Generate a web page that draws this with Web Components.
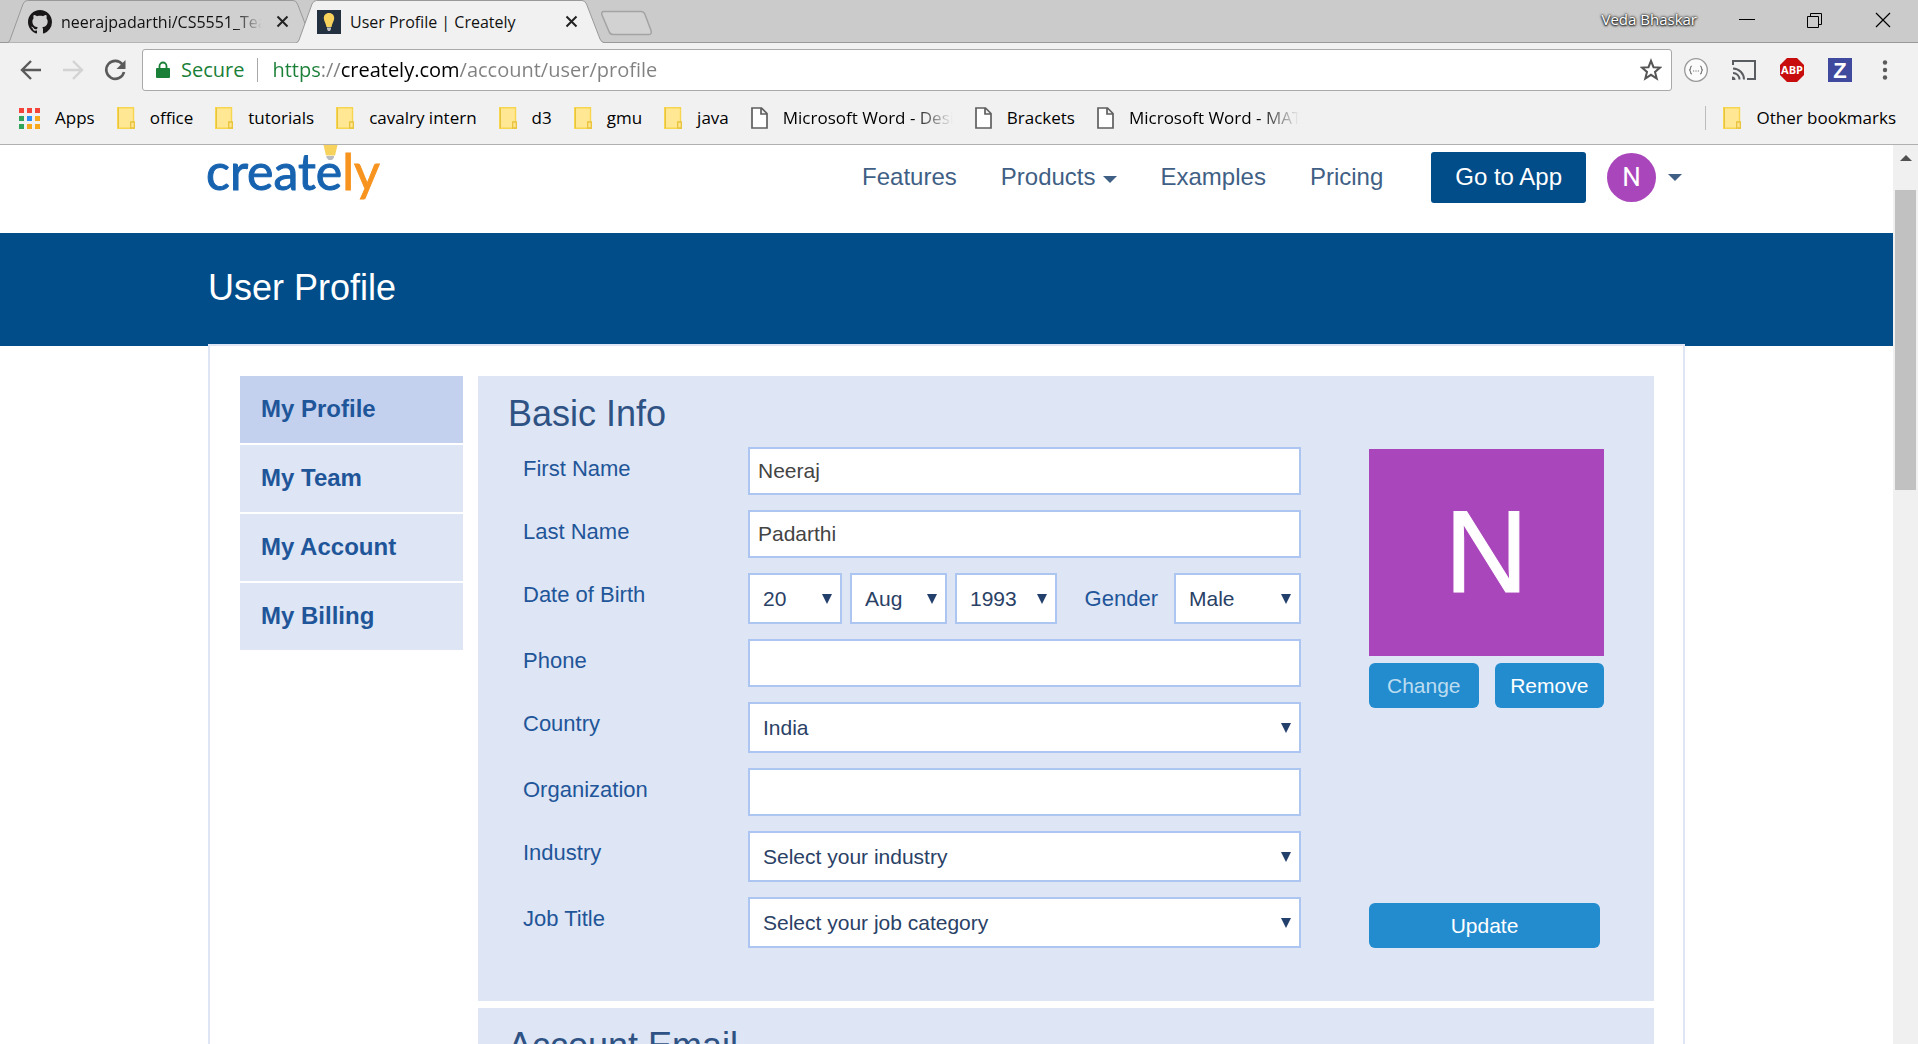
<!DOCTYPE html>
<html lang="en">
<head>
<meta charset="utf-8">
<title>User Profile | Creately</title>
<style>
  html, body { margin: 0; height: 100%; overflow: hidden; }
  body { font-family: "Liberation Sans", Arial, sans-serif; background: #fff; }
</style>
</head>
<body>
<app-window></app-window>

<script>
const UI = '"Open Sans", "Noto Sans", sans-serif';

function define(name, render) {
  customElements.define(name, class extends HTMLElement {
    connectedCallback() {
      if (this.shadowRoot) return;
      this.attachShadow({ mode: 'open' }).innerHTML = render(this);
    }
  });
}
const attr = (el, n, d = '') => el.getAttribute(n) ?? d;

/* ---------- browser frame ---------- */

define('browser-tab', el => {
  const on = el.hasAttribute('active');
  return `
<style>
  :host { display: grid; grid-template-columns: 308px; height: 43px; margin-right: -19px; position: relative; z-index: ${on ? 1 : 0}; font: 16px/22px ${UI}; color: #111; }
  svg.shape, .row { grid-area: 1 / 1; }
  .row { display: flex; align-items: center; min-width: 0; padding: 0 26px 0 21px; }
  .title { flex: 1; min-width: 0; margin: 0 14px 0 9px; overflow: hidden; white-space: nowrap; ${on ? '' : '-webkit-mask-image: linear-gradient(90deg,#000 86%,transparent); mask-image: linear-gradient(90deg,#000 86%,transparent);'} }
  button { border: 0; padding: 0; background: none; width: 13px; height: 13px; display: block; }
  button svg { display: block; }
</style>
<svg class="shape" width="308" height="43" viewBox="0 0 308 43">
  <path d="M0 ${on ? 43.5 : 42.5} L0.5 42.5 Q2 42.5 3 40 L16 4 Q17.500 0.500 20.500 0.500 H286 Q289 0.500 290.500 4 L304 39 Q305.500 42.500 308 42.500 ${on ? 'V43.500' : ''}" fill="${on ? '#f1f1f1' : '#d0d0d0'}" stroke="#999"/>
  ${on ? '<path d="M2 42h304v1H2z" fill="#f1f1f1"/>' : ''}
</svg>
<div class="row">
  <slot name="icon"></slot>
  <span class="title"><slot></slot></span>
  <button aria-label="Close tab"><svg width="13" height="13" viewBox="0 0 13 13"><path d="M1.500 1.500l10 10M11.500 1.500l-10 10" stroke="#222" stroke-width="2"/></svg></button>
</div>`;
});

define('tab-strip', () => `
<style>
  :host { display: flex; height: 42px; background: #cbcbcb; border-bottom: 1px solid #999; font: 16px/22px ${UI}; }
  .tabs { display: flex; flex: 1; padding-left: 7px; }
  .new { border: 0; background: none; padding: 0; margin: 10px 0 0 15px; height: 26px; }
  svg { display: block; }
  .user { color: #fff; margin: 8px 0 0; height: 22px; text-shadow: 0 0 3px #222, 0 0 2px #222, 0 1px 2px #222; font-size: 15px; }
  .win { display: flex; gap: 52px; padding: 12px 27px 0 42px; }
  .win button { border: 0; background: none; padding: 0; width: 16px; height: 16px; }
</style>
<div class="tabs">
  <browser-tab>
    <svg slot="icon" width="24" height="24" viewBox="0 0 16 16"><path fill="#191717" d="M8 0C3.580 0 0 3.580 0 8c0 3.540 2.290 6.530 5.470 7.590.4.070.550-.170.550-.380 0-.190-.010-.820-.010-1.490-2.010.370-2.530-.490-2.690-.940-.090-.230-.480-.940-.820-1.130-.280-.150-.680-.520-.010-.530.630-.010 1.080.580 1.230.820.720 1.210 1.870.870 2.330.660.070-.520.280-.870.510-1.070-1.780-.2-3.640-.890-3.640-3.950 0-.870.310-1.590.820-2.150-.080-.2-.360-1.020.080-2.120 0 0 .670-.210 2.200.820.640-.180 1.320-.270 2-.270s1.360.090 2 .270c1.530-1.040 2.200-.820 2.200-.820.440 1.100.160 1.920.080 2.120.510.560.820 1.270.820 2.150 0 3.070-1.870 3.750-3.650 3.950.290.250.540.730.540 1.480 0 1.070-.010 1.930-.010 2.200 0 .210.150.460.550.380A8.010 8.010 0 0 0 16 8c0-4.420-3.580-8-8-8z"/></svg>
    neerajpadarthi/CS5551_Team</browser-tab>
  <browser-tab active>
    <svg slot="icon" width="24" height="24" viewBox="0 0 24 24"><path fill="#22303f" d="M0 0h24v24H0z"/><path fill="#f7d25c" d="M12 3c3.400 0 5.200 2.400 5.200 5.200 0 3-2.200 5-2.700 8.800h-5C9 13.200 6.800 11.200 6.800 8.200 6.800 5.400 8.600 3 12 3z"/><path fill="#b9bcc0" d="M10 17.500h4v1.500l-1 2h-2l-1-2z"/></svg>
    User Profile | Creately</browser-tab>
  <button class="new" aria-label="New tab"><svg width="52" height="26" viewBox="0 0 52 26"><path d="M4 1.500h37q3 0 4 3l6 16q1 4-2 4H13q-3 0-4-3L2 5q-1-3.500 2-3.500z" fill="#d2d2d2" stroke="#a3a3a3" stroke-width="1.500"/></svg></button>
</div>
<span class="user">Veda Bhaskar</span>
<div class="win">
  <button aria-label="Minimize"><svg width="16" height="16"><path d="M0 7.500h16" stroke="#000"/></svg></button>
  <button aria-label="Restore"><svg width="16" height="16" fill="none" stroke="#000"><path d="M.5 4.500h11v11H.5zM3.500 4V1.500h11v11H12"/></svg></button>
  <button aria-label="Close"><svg width="16" height="16"><path d="M1 1l14 14M15 1L1 15" stroke="#000" stroke-width="1.200"/></svg></button>
</div>`);

define('tool-bar', () => `
<style>
  :host { display: flex; align-items: center; height: 42px; padding: 6px 22px 5px 19px; background: #f1f1f1; }
  button { border: 0; background: none; padding: 0; display: block; height: 24px; }
  svg { display: block; }
  .nav { display: flex; gap: 18px; margin-right: 15px; }
  .box { flex: 1; display: flex; align-items: center; box-sizing: border-box; height: 42px; border: 1px solid #a9a9a9; border-radius: 3px; background: #fff; padding: 0 9px 0 13px; font: 20px/28px ${UI}; color: #1a7f37; }
  .secure { margin: 0 13px 0 11px; }
  .sep { width: 1px; height: 24px; background: #a9a9a9; margin-right: 14px; }
  input { flex: 1; min-width: 0; border: 0; padding: 0; outline: 0; font: inherit; color: transparent;
    background: linear-gradient(90deg, #1a7f37 0 var(--a), #808080 var(--a) var(--b), #000 var(--b) var(--c), #808080 var(--c));
    --a: 48px; --b: 69px; --c: 187px; -webkit-background-clip: text; background-clip: text; }
  .ext { display: flex; gap: 24px; margin-left: 12px; }
</style>
<div class="nav">
  <button aria-label="Back"><svg width="24" height="24" viewBox="0 0 24 24" fill="none" stroke="#5a5a5a" stroke-width="2.400"><path d="M22 12H4M12 3l-9 9 9 9"/></svg></button>
  <button aria-label="Forward"><svg width="24" height="24" viewBox="0 0 24 24" fill="none" stroke="#d3d3d3" stroke-width="2.400"><path d="M2 12h18M12 3l9 9-9 9"/></svg></button>
  <button aria-label="Reload"><svg width="24" height="24" viewBox="0 0 24 24"><path d="M19.500 6.500A9 9 0 1 0 21 14" fill="none" stroke="#5a5a5a" stroke-width="2.600"/><path d="M22.500 2v9h-9z" fill="#5a5a5a"/></svg></button>
</div>
<div class="box">
  <svg width="14" height="18" viewBox="0 0 14 18"><path fill="#1a7f37" d="M1 7h12q1 0 1 1v8q0 1-1 1H1q-1 0-1-1V8q0-1 1-1z"/><path d="M3.500 8V5a3.500 3.500 0 0 1 7 0v3" fill="none" stroke="#1a7f37" stroke-width="1.800"/></svg>
  <span class="secure">Secure</span><span class="sep"></span>
  <input type="text" aria-label="Address" value="https://creately.com/account/user/profile">
  <button aria-label="Bookmark this page"><svg width="22" height="24" viewBox="0 0 22 24"><path d="M11 2.800l2.500 6.400 6.600.4-5.100 4.300 1.700 6.600L11 16.800l-5.700 3.700L7 13.900 1.900 9.600l6.600-.4z" fill="none" stroke="#555" stroke-width="2"/></svg></button>
</div>
<div class="ext">
  <button aria-label="JSON view"><svg width="24" height="24" viewBox="0 0 24 24" fill="none" stroke="#999"><circle cx="12" cy="12" r="11.300" fill="#fbfbfb" stroke-width="1.300"/><path d="M8 8q-1.500 0-1.500 2t-1.500 2q1.500 0 1.500 2T8 16M16 8q1.500 0 1.500 2t1.500 2q-1.500 0-1.500 2T16 16" stroke="#777" stroke-width="1.200"/><path d="M9 13h1.200M11.400 13h1.200M13.800 13H15" stroke="#777" stroke-width="1.200"/></svg></button>
  <button aria-label="Cast"><svg width="24" height="24" viewBox="0 0 24 24" fill="none" stroke="#5a5d61" stroke-width="2"><path d="M1 7V3h22v18h-8M1 10.500A11 11 0 0 1 12 21.500M1 15a6.500 6.500 0 0 1 6.500 6.500" /><path d="M0 18.500A3.500 3.500 0 0 1 3.500 22H0z" fill="#5a5d61" stroke="none"/></svg></button>
  <button aria-label="Adblock Plus"><svg width="24" height="24" viewBox="0 0 24 24"><path d="M7 0h10l7 7v10l-7 7H7l-7-7V7z" fill="#c70d0d"/><text x="12" y="16" text-anchor="middle" font-family="Open Sans" font-weight="700" font-size="11" fill="#fff">ABP</text></svg></button>
  <button aria-label="Zotero"><svg width="24" height="24" viewBox="0 0 24 24" overflow="visible"><path d="M0 0h24v24H0z" fill="#3f4a9e"/><text x="12" y="20" text-anchor="middle" font-family="Liberation Sans" font-weight="700" font-size="22" fill="#fff">Z</text></svg></button>
  <button aria-label="Menu"><svg width="20" height="24" viewBox="0 0 20 24" fill="#5a5a5a"><circle cx="9" cy="4.500" r="2.200"/><circle cx="9" cy="12" r="2.200"/><circle cx="9" cy="19.500" r="2.200"/></svg></button>
</div>`);

const ICONS = {
  folder: `<svg width="18" height="22" viewBox="0 0 18 22"><path d="M.7.7h15.800v14l.8 1v5.600H.7z" fill="#ffe793" stroke="#f7d54f" stroke-width="1.400"/><path d="M1 1h1v20H1z" fill="#e8c33d"/><path d="M13.700 21v-6h3.600v6z" fill="#ffe793" stroke="#e8c33d" stroke-width="1.300"/></svg>`,
  page: `<svg width="17" height="22" viewBox="0 0 17 22"><path d="M1 1h9.500L16 6.500V21H1zM10 1v6h6" fill="#fff" stroke="#5f5f5f" stroke-width="1.700"/></svg>`,
  apps: `<svg width="21" height="21" viewBox="0 0 21 21"><path fill="#f4443a" d="M0 0h5v5H0zM8 0h5v5H8zM16 0h5v5h-5z"/><path fill="#2fa45a" d="M0 8h5v5H0zM0 16h5v5H0z"/><path fill="#2a8cf7" d="M8 8h5v5H8z"/><path fill="#f7a81b" d="M16 8h5v5h-5zM8 16h5v5H8zM16 16h5v5h-5z"/></svg>`
};
define('book-mark', el => `
<style>
  :host { display: block; }
  a { display: flex; align-items: center; gap: 15px; color: #000; text-decoration: none; font: 17px/22px ${UI}; white-space: nowrap; }
  svg { display: block; flex: none; }
  :host([long]) span { width: 170px; overflow: hidden; -webkit-mask-image: linear-gradient(90deg,#000 76%,transparent); mask-image: linear-gradient(90deg,#000 76%,transparent); }
</style>
<a href="#">${ICONS[attr(el, 'icon', 'folder')]}<span><slot></slot></span></a>`);

define('bookmark-bar', () => `
<style>
  :host { display: flex; align-items: center; gap: 22px; height: 44px; padding: 0 22px 4px 19px; background: #f1f1f1; border-bottom: 1px solid #b0b0b0; }
  .fill { flex: 1; }
  .sep { width: 1px; height: 24px; background: #bdbdbd; margin-right: -5px; }
</style>
<book-mark icon="apps">Apps</book-mark>
<book-mark>office</book-mark>
<book-mark>tutorials</book-mark>
<book-mark>cavalry intern</book-mark>
<book-mark>d3</book-mark>
<book-mark>gmu</book-mark>
<book-mark>java</book-mark>
<book-mark icon="page" long>Microsoft Word - Design</book-mark>
<book-mark icon="page">Brackets</book-mark>
<book-mark icon="page" long>Microsoft Word - MATH</book-mark>
<span class="fill"></span><span class="sep"></span>
<book-mark>Other bookmarks</book-mark>`);

define('scroll-rail', () => `
<style>
  :host { display: flex; flex-direction: column; align-items: center; width: 25px; background: #f0f0f0; }
  svg { display: block; margin: 10px 0 29px; }
  .thumb { width: 21px; height: 300px; background: #c1c1c1; }
</style>
<svg width="12" height="6" viewBox="0 0 12 6"><path d="M0 6l6-6 6 6z" fill="#505050"/></svg>
<div class="thumb"></div>`);

/* ---------- site ---------- */

define('site-header', () => `
<style>
  :host { display: block; }
  .in { display: flex; align-items: flex-start; max-width: 1477px; height: 88px; margin: 0 auto; }
  .logo { display: block; margin-right: auto; }
  svg { display: block; }
  nav { display: flex; align-items: center; gap: 44px; height: 64px; font-size: 24px; line-height: 28px; }
  nav a { color: #3f5f85; text-decoration: none; display: flex; align-items: center; gap: 7px; }
  nav a svg { margin-top: 4px; }
  button { font: inherit; border: 0; cursor: pointer; }
  .go { background: #004d8a; color: #fff; height: 51px; padding: 0 24px; border-radius: 3px; margin-left: 4px; }
  .me { display: flex; align-items: center; gap: 12px; padding: 0 3px 0 0; background: none; margin-left: -23px; }
  .face { width: 49px; height: 49px; border-radius: 50%; background: #aa46bb; color: #fff; font: 26px/49px Roboto, sans-serif; text-align: center; }
</style>
<div class="in">
  <a class="logo" href="#" aria-label="Creately home">
    <svg width="180" height="60" viewBox="0 0 180 60" overflow="visible"><g font-family="Lato, sans-serif" font-size="50" stroke-width="1"><text x="-2" y="45" fill="#1763b0" stroke="#1763b0">create<tspan fill="#f7941f" stroke="#f7941f">ly</tspan></text></g><path d="M115.500 0h14l-2.500 10.500h-9z" fill="#f7d25c"/><path d="M118.500 11h7.500v1.500l-2 2.500h-3.500l-2-2.500z" fill="#b9bcc0"/></svg>
  </a>
  <nav>
    <a href="#">Features</a>
    <a href="#">Products <svg width="14" height="7"><path d="M0 0h14L7 7z" fill="#3f5f85"/></svg></a>
    <a href="#">Examples</a>
    <a href="#">Pricing</a>
    <button class="go">Go to App</button>
    <button class="me" aria-label="Account menu"><span class="face">N</span><svg width="14" height="7"><path d="M0 0h14L7 7z" fill="#3f5f85"/></svg></button>
  </nav>
</div>`);

define('page-banner', () => `
<style>
  :host { display: block; background: #004d8a; color: #fff; }
  h1 { max-width: 1477px; height: 113px; margin: 0 auto; font-weight: 400; font-size: 36px; line-height: 110px; }
</style>
<h1><slot></slot></h1>`);

define('side-link', el => `
<style>
  :host { display: block; }
  a { display: block; padding: 0 21px 2px; font-weight: 700; font-size: 24px; line-height: 65px; color: #1f5599; text-decoration: none; background: ${el.hasAttribute('current') ? '#c3d1ef' : '#dee5f4'}; }
</style>
<a href="#"><slot></slot></a>`);

const FIELD = `
  label, .label { font-size: 22px; line-height: 44px; color: #1f5599; }
  input { box-sizing: border-box; width: 100%; height: 48px; border: 2px solid #adc5f1; border-radius: 0; padding: 0 8px; background: #fff; font: 21px "Liberation Sans", Arial, sans-serif; color: #444; outline: 0; }
  .pick { display: grid; align-items: center; }
  .pick > * { grid-area: 1 / 1; }
  .pick svg { display: block; justify-self: end; margin-right: 10px; pointer-events: none; }
  select { appearance: none; box-sizing: border-box; width: 100%; height: 51px; border: 2px solid #adc5f1; border-radius: 0; padding: 0 24px 0 13px; background: #fff; font: 21px "Liberation Sans", Arial, sans-serif; color: #2a4166; outline: 0; }
  :host { display: grid; grid-template-columns: 225px 1fr; align-items: start; }`;
const pick = (id, value, label) => `<div class="pick"><select id="${id}"${label ? ` aria-label="${label}"` : ''}><option>${value}</option></select><svg width="10" height="10" viewBox="0 0 10 10"><path d="M0 0h10L5 10z" fill="#233f6b"/></svg></div>`;

define('text-field', el => `<style>${FIELD}</style>
<label for="f">${attr(el, 'label')}</label><input id="f" type="text" value="${attr(el, 'value')}">`);

define('choice-field', el => `<style>${FIELD}</style>
<label for="f">${attr(el, 'label')}</label>${pick('f', attr(el, 'value'))}`);

define('birth-field', () => `<style>${FIELD}
  .set { display: grid; grid-template-columns: 94px 97px 102px 1fr 127px; gap: 8px; align-items: center; }
  .set label { justify-self: end; margin-right: 8px; }
</style>
<label for="day">Date of Birth</label>
<div class="set">${pick('day', '20')}${pick('month', 'Aug', 'Month')}${pick('year', '1993', 'Year')}<label for="g">Gender</label>${pick('g', 'Male')}</div>`);

define('action-button', el => `
<style>
  :host { display: block; }
  button { width: 100%; height: 45px; border: 0; border-radius: 6px; padding: 0; background: #238ccf; color: ${el.hasAttribute('soft') ? '#bcdcf0' : '#fff'}; font: 21px "Liberation Sans", Arial, sans-serif; cursor: pointer; }
</style>
<button><slot></slot></button>`);

define('info-panel', el => `
<style>
  :host { display: block; background: #dee5f4; padding: 17px 50px 53px 30px; }
  h2 { margin: 0 0 12px; font-weight: 400; font-size: 36px; line-height: 42px; color: #2e5283; }
  .body { padding-left: 15px; }
</style>
<h2>${attr(el, 'heading')}</h2>
<div class="body"><slot></slot></div>`);

define('profile-form', () => `
<style>
  :host { display: grid; grid-template-columns: 1fr 235px; gap: 68px; }
  .fields { display: flex; flex-direction: column; gap: 15px; }
  .side { display: flex; flex-direction: column; padding-top: 2px; }
  .photo { height: 207px; background: #aa46bb; color: #fff; font-size: 116px; line-height: 207px; text-align: center; -webkit-text-stroke: 1px #fff; }
  .pair { display: grid; grid-template-columns: 1fr 1fr; gap: 16px; margin: 7px 0 auto; }
  .update { margin-right: 4px; }
</style>
<div class="fields">
  <text-field label="First Name" value="Neeraj"></text-field>
  <text-field label="Last Name" value="Padarthi"></text-field>
  <birth-field></birth-field>
  <text-field label="Phone"></text-field>
  <choice-field label="Country" value="India"></choice-field>
  <text-field label="Organization"></text-field>
  <choice-field label="Industry" value="Select your industry"></choice-field>
  <choice-field label="Job Title" value="Select your job category"></choice-field>
</div>
<div class="side">
  <div class="photo">N</div>
  <div class="pair"><action-button soft>Change</action-button><action-button>Remove</action-button></div>
  <action-button class="update">Update</action-button>
</div>`);

define('account-page', () => `
<style>
  :host { display: block; flex: 1; min-width: 0; overflow: hidden; }
  .card { display: grid; grid-template-columns: 223px 1fr; gap: 15px; align-items: start; box-sizing: border-box; max-width: 1477px; margin: -2px auto 0; padding: 30px 29px 30px 30px; border: 2px solid #dee5f4; background: #fff; position: relative; }
  nav { display: flex; flex-direction: column; gap: 2px; }
  main { display: flex; flex-direction: column; gap: 7px; }
</style>
<site-header></site-header>
<page-banner>User Profile</page-banner>
<div class="card">
  <nav>
    <side-link current>My Profile</side-link>
    <side-link>My Team</side-link>
    <side-link>My Account</side-link>
    <side-link>My Billing</side-link>
  </nav>
  <main>
    <info-panel heading="Basic Info"><profile-form></profile-form></info-panel>
    <info-panel heading="Account Email"></info-panel>
  </main>
</div>`);

define('app-window', () => `
<style>
  :host { display: flex; flex-direction: column; height: 100vh; overflow: hidden; }
  .view { flex: 1; min-height: 0; display: flex; }
</style>
<tab-strip></tab-strip>
<tool-bar></tool-bar>
<bookmark-bar></bookmark-bar>
<div class="view"><account-page></account-page><scroll-rail></scroll-rail></div>`);
</script>
</body>
</html>
